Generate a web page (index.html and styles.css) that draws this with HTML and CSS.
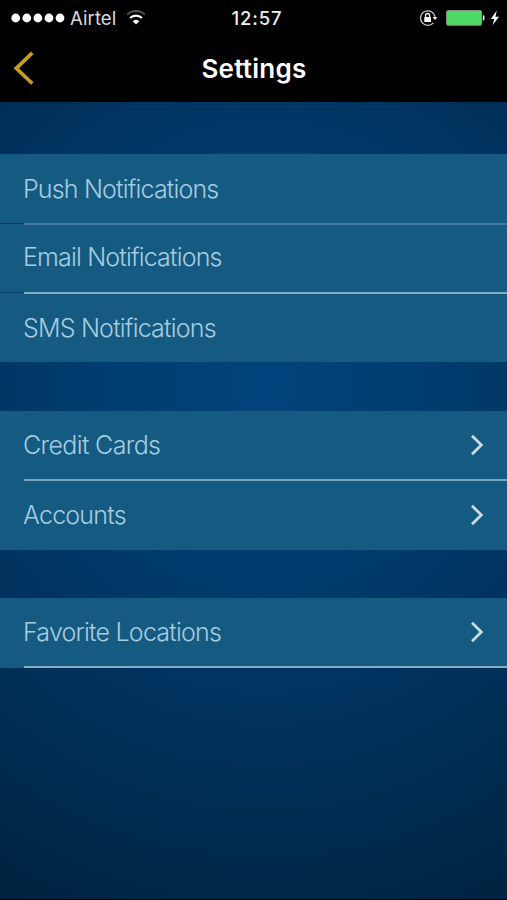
FILE: index.html
```html
<!DOCTYPE html>
<html lang="en">
<head>
<meta charset="utf-8">
<title>Settings</title>
<link rel="stylesheet" href="styles.css">
</head>
<body>
<div class="screen">
  <header class="header">
    <div class="status">
      <div class="carrier">
        <svg class="dots" width="54" height="10" viewBox="0 0 54 10" fill="#fff"><circle cx="4.7" cy="5" r="4.4"/><circle cx="15.8" cy="5" r="4.4"/><circle cx="26.9" cy="5" r="4.4"/><circle cx="38" cy="5" r="4.4"/><circle cx="49" cy="5" r="4.4"/></svg>
        <span class="carrier-name">Airtel</span>
        <svg class="wifi" width="20" height="16" viewBox="0 0 20 16" fill="none" stroke-width="1.8"><path d="M1.2 5.6a12.6 12.6 0 0 1 17.6 0" stroke="#555"/><path d="M4.1 9a8.5 8.5 0 0 1 11.8 0" stroke="#fff" stroke-width="2.3"/><path d="M6.8 12.2a5 5 0 0 1 6.4 0L10 15.6z" fill="#fff"/></svg>
      </div>
      <time class="time">12:57</time>
      <div class="power">
        <svg class="lock" width="19" height="18" viewBox="0 0 19 18" fill="none" stroke="#ccc" stroke-width="1.3"><path d="M15 5.2a7.3 7.3 0 1 0-.6 8.6"/><path d="M15 5.2a7.3 7.3 0 0 1 .8 2.6"/><path d="M13.7 7.9h4.6L16 11z" fill="#fff" stroke="none"/><rect x="5.3" y="8" width="6.6" height="5" fill="#fff" stroke="none"/><path d="M6.6 8.3V6.5a2 2 0 0 1 4 0v1.8" stroke="#fff"/></svg>
        <svg class="battery" width="39" height="18" viewBox="0 0 39 18"><rect x=".6" y="1.6" width="35" height="14.6" rx="1.5" fill="#4cd964" stroke="#87977f" stroke-width="1"/><path d="M36.8 6.2h.7q1 0 1 1v3.4q0 1-1 1h-.7z" fill="#ddd"/></svg>
        <svg class="bolt" width="10" height="16" viewBox="0 0 10 16"><path d="M6.8.5.8 8.9h3.5L2.6 15.2 9 6.8H5.4z" fill="#fff"/></svg>
      </div>
    </div>
    <nav class="nav">
      <svg class="back" width="24" height="34" viewBox="0 0 24 34" fill="none" stroke="#c99c27" stroke-width="3.7"><path d="M21.3 1.8 5.3 17.3l16 15.2"/></svg>
      <h1 class="title">Settings</h1>
      <span></span>
    </nav>
  </header>
  <main class="content">
    <section class="group group-toggles">
      <div class="row notched faint"><span class="label push">Push Notifications</span></div>
      <div class="row notched"><span class="label email">Email Notifications</span></div>
      <div class="row last"><span class="label sms">SMS Notifications</span></div>
    </section>
    <section class="group group-links">
      <div class="row thick"><span class="label cards">Credit Cards</span><svg class="chevron" width="16" height="22" viewBox="0 0 16 22"><path d="M3 1.8 12.3 11 3 20.2"/></svg></div>
      <div class="row last"><span class="label accounts">Accounts</span><svg class="chevron" width="16" height="22" viewBox="0 0 16 22"><path d="M3 1.8 12.3 11 3 20.2"/></svg></div>
    </section>
    <section class="group">
      <div class="row"><span class="label locations">Favorite Locations</span><svg class="chevron" width="16" height="22" viewBox="0 0 16 22"><path d="M3 1.8 12.3 11 3 20.2"/></svg></div>
    </section>
  </main>
</div>
</body>
</html>
```

FILE: styles.css
```css
* { box-sizing: border-box; }
body { margin: 0; background: #000; }
svg { display: block; flex: none; }
.screen {
  width: 507px;
  height: 900px;
  display: flex;
  flex-direction: column;
  overflow: hidden;
  background: #000;
  font-family: Inter, "Liberation Sans", sans-serif;
}
.header { height: 102px; flex: none; color: #fff; }
.status {
  height: 36px;
  display: grid;
  grid-template-columns: 1fr auto 1fr;
  align-items: center;
  padding: 0 7px 0 11px;
}
.carrier, .power { display: flex; align-items: center; }
.carrier-name { margin-left: 5px; font-size: 18.5px; letter-spacing: .1px; color: #ddd; line-height: 36px; }
.wifi { margin-left: 10px; margin-top: -3px; }
.time { font-size: 18.5px; font-weight: 500; letter-spacing: .9px; color: #eee; line-height: 36px; padding-left: 3px; }
.power { justify-content: flex-end; }
.battery { margin-left: 8px; }
.bolt { margin-left: 5px; }
.nav {
  height: 66px;
  display: grid;
  grid-template-columns: 1fr auto 1fr;
  align-items: center;
  padding: 0 10px 2px 11px;
}
.title { margin: 0; font-size: 26px; font-weight: 600; letter-spacing: .25px; line-height: 32px; padding-top: 1px; }
.content {
  height: 797px;
  flex: none;
  padding-top: 52px;
  background: radial-gradient(ellipse 580px 610px at 265px 278px, #00437c 0%, #003b6c 35%, #00305b 59%, #002848 85%, #00213d 100%);
}
.group { margin-bottom: 48px; }
.group-toggles { margin-bottom: 49px; }
.row {
  position: relative;
  height: 70px;
  display: flex;
  align-items: center;
  justify-content: space-between;
  padding: 0 22px 2px 23px;
  background: #155a80;
}
.row::after {
  content: "";
  position: absolute;
  left: 24px;
  right: 0;
  bottom: 0;
  height: 2px;
  background: #82adc3;
}
.row.notched { background: linear-gradient(#003d68, #003d68) 0 100% / 24px 1px no-repeat, #155a80; }
.row.notched::after { bottom: -1px; z-index: 1; }
.row.faint::after { background: #42799a; }
.row.thick::after { background: #75a4bd; }
.row.last { height: 69px; }
.group-toggles .row:first-child { padding-bottom: 0; }
.group-toggles .row:nth-child(2) { height: 69px; padding-bottom: 4px; }
.group-toggles .row.last { padding-bottom: 0; }
.row.last::after { display: none; }
.label { font-size: 25px; font-weight: 300; line-height: 32px; color: #a6cce0; white-space: nowrap; }
.push { letter-spacing: -.83px; }
.email { letter-spacing: -.83px; }
.sms { letter-spacing: -.8px; }
.cards { letter-spacing: -.65px; }
.accounts { letter-spacing: -.78px; }
.locations { letter-spacing: -.78px; }
.chevron { fill: none; stroke: #cbd9e2; stroke-width: 2.8; }
```
